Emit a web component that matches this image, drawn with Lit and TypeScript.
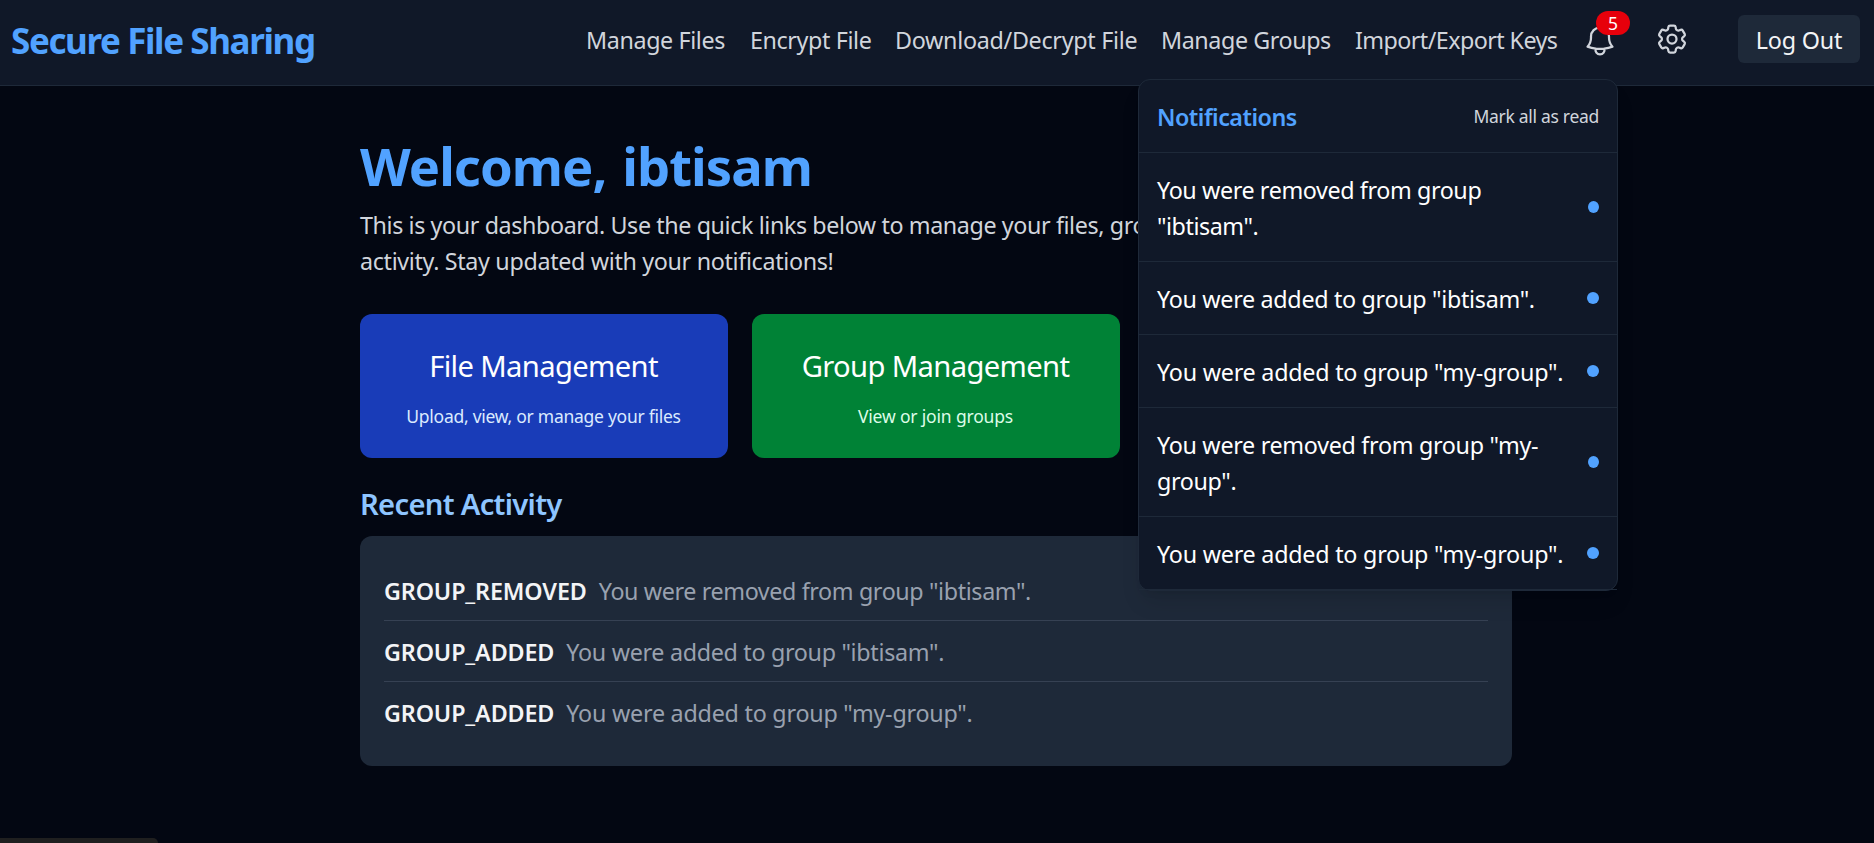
import { LitElement, html, css } from "lit";
import { customElement } from "lit/decorators.js";

interface Span { text: string; width?: number; track: number }

const links: Span[] = [
  { text: "Manage Files", width: 140, track: -0.38 },
  { text: "Encrypt File", width: 121, track: -0.39 },
  { text: "Download/Decrypt File", width: 242, track: -0.29 },
  { text: "Manage Groups", width: 170, track: -0.42 },
  { text: "Import/Export Keys", width: 202, track: -0.57 },
];

const notifications: Span[][] = [
  [{ text: "You were removed from group", track: -0.39 }, { text: '"ibtisam".', track: -0.45 }],
  [{ text: 'You were added to group "ibtisam".', track: -0.31 }],
  [{ text: 'You were added to group "my-group".', track: -0.23 }],
  [{ text: 'You were removed from group "my-', track: -0.3 }, { text: 'group".', track: -0.35 }],
  [{ text: 'You were added to group "my-group".', track: -0.23 }],
];

const activity: [string, Span][] = [
  ["GROUP_REMOVED", { text: 'You were removed from group "ibtisam".', track: -0.38 }],
  ["GROUP_ADDED", { text: 'You were added to group "ibtisam".', track: -0.31 }],
  ["GROUP_ADDED", { text: 'You were added to group "my-group".', track: -0.23 }],
];

@customElement("notification-panel")
class NotificationPanel extends LitElement {
  static styles = css`
    :host {
      display: block;
      box-sizing: border-box;
      width: 480px;
      background: #101828;
      border: 1px solid #1e2939;
      border-radius: 12px;
      box-shadow: 0 15px 22px -4px rgba(0, 0, 0, 0.1), 0 6px 9px -6px rgba(0, 0, 0, 0.1);
      color: #fff;
      white-space: nowrap;
    }
    .row {
      display: flex;
      justify-content: space-between;
      align-items: center;
      padding: 0 18px;
      border-bottom: 1px solid #1e2939;
    }
    .copy { padding: 19px 0 17px; }
    .line { display: block; line-height: 36px; }
    .title { font-weight: 600; letter-spacing: -0.5px; color: #51a2ff; }
    .mark { font-size: 17.5px; letter-spacing: -0.3px; color: #d1d5dc; }
    .dot { width: 12px; height: 12px; border-radius: 50%; background: #51a2ff; }
    .dot.narrow { width: 11px; }
  `;
  render() {
    return html`
      <div class="row">
        <div class="copy"><span class="line title">Notifications</span></div>
        <span class="mark">Mark all as read</span>
      </div>
      ${notifications.map((n) => html`
        <div class="row">
          <div class="copy">
            ${n.map((l) => html`<span class="line" style="letter-spacing:${l.track}px">${l.text}</span>`)}
          </div>
          <span class="dot ${n.length > 1 ? "narrow" : ""}"></span>
        </div>`)}
    `;
  }
}

@customElement("app-root")
class AppRoot extends LitElement {
  static styles = css`
    :host {
      display: flex;
      flex-direction: column;
      height: 843px;
      overflow: hidden;
      background: #030712;
      font-family: "Noto Sans", sans-serif;
      font-size: 23.3px;
      line-height: 36px;
      color: #f3f4f6;
      white-space: nowrap;
    }
    h1, h2, p { margin: 0; }
    header {
      display: flex;
      align-items: flex-start;
      box-sizing: border-box;
      height: 86px;
      padding-left: 11px;
      background: #101828;
      border-bottom: 1px solid #1e2939;
    }
    .brand {
      width: 575px;
      padding-top: 17px;
      line-height: 48px;
      font-size: 35px;
      font-weight: 700;
      letter-spacing: -1.39px;
      color: #51a2ff;
    }
    nav { display: flex; gap: 24px; padding-top: 22px; color: #d1d5dc; }
    .bell { position: relative; margin: 23px 0 0 25px; width: 36px; height: 36px; color: #d1d5dc; }
    .gear { margin: 21px 0 0 36px; width: 36px; height: 36px; color: #d1d5dc; }
    svg { display: block; width: 36px; height: 36px; }
    .badge {
      position: absolute;
      left: 14px;
      top: -12px;
      width: 34px;
      height: 24px;
      border-radius: 12px;
      background: #e7000b;
      color: #fff;
      font-size: 17.5px;
      line-height: 25px;
      text-align: center;
    }
    notification-panel { position: absolute; right: 0; top: 56px; z-index: 2; }
    .logout {
      box-sizing: border-box;
      width: 122px;
      height: 48px;
      margin: 15px 0 0 48px;
      padding-top: 7px;
      border-radius: 6px;
      background: #1e2939;
      text-align: center;
      letter-spacing: -0.19px;
    }
    main { width: 1152px; margin: 50px 0 0 360px; }
    .hello { line-height: 60px; font-size: 52.5px; font-weight: 700; letter-spacing: -0.95px; word-spacing: 3px; color: #51a2ff; }
    .intro { padding-top: 11px; color: #d1d5dc; letter-spacing: -0.4px; }
    .intro .second { letter-spacing: -0.335px; }
    .cards { display: grid; grid-template-columns: repeat(3, 368px); gap: 24px; margin-top: 35px; }
    .card { box-sizing: border-box; height: 144px; padding: 31px 1px 0 0; border-radius: 12px; text-align: center; }
    .card h2 { line-height: 42px; font-size: 29.2px; font-weight: 400; letter-spacing: -0.64px; color: #fff; }
    .card p { margin-top: 15px; line-height: 28px; font-size: 17.5px; letter-spacing: -0.27px; }
    .files { background: #193cb8; color: #dbeafe; }
    .groups { background: #008236; color: #dcfce7; }
    .groups p { letter-spacing: -0.17px; }
    .recent { margin-top: 25px; line-height: 42px; font-size: 29.2px; font-weight: 600; letter-spacing: -0.7px; color: #8ec5ff; }
    .log { margin-top: 11px; padding: 24px; border-radius: 12px; background: #1e2939; }
    .entry { display: flex; gap: 12px; padding: 13px 0 11px; border-bottom: 1px solid #364153; color: #99a1af; }
    .entry:last-child { border-bottom: 0; }
    .kind { font-weight: 600; letter-spacing: -0.12px; color: #f3f4f6; }
    .status { width: 158px; height: 5px; margin-top: auto; border-top-right-radius: 6px; background: #1f1f1f; }
  `;
  render() {
    return html`
      <header>
        <div class="brand">Secure File Sharing</div>
        <nav>
          ${links.map((l) => html`<span style="width:${l.width}px;letter-spacing:${l.track}px">${l.text}</span>`)}
        </nav>
        <div class="bell">
          <svg viewBox="0 0 24 24" fill="none" stroke="currentColor" stroke-width="1.5" stroke-linecap="round" stroke-linejoin="round">
            <path d="M14.857 17.082a23.848 23.848 0 0 0 5.454-1.31A8.967 8.967 0 0 1 18 9.75V9A6 6 0 0 0 6 9v.75a8.967 8.967 0 0 1-2.312 6.022c1.733.64 3.56 1.085 5.455 1.31m5.714 0a24.255 24.255 0 0 1-5.714 0m5.714 0a3 3 0 1 1-5.714 0" />
          </svg>
          <span class="badge">5</span>
          <notification-panel></notification-panel>
        </div>
        <div class="gear">
          <svg viewBox="0 0 24 24" fill="none" stroke="currentColor" stroke-width="1.5" stroke-linecap="round" stroke-linejoin="round">
            <path d="M9.594 3.94c.09-.542.56-.94 1.11-.94h2.593c.55 0 1.02.398 1.11.94l.213 1.281c.063.374.313.686.645.87.074.04.147.083.22.127.325.196.72.257 1.075.124l1.217-.456a1.125 1.125 0 0 1 1.37.49l1.296 2.247a1.125 1.125 0 0 1-.26 1.431l-1.003.827c-.293.241-.438.613-.43.992a7.723 7.723 0 0 1 0 .255c-.008.378.137.75.43.991l1.004.827c.424.35.534.955.26 1.43l-1.298 2.247a1.125 1.125 0 0 1-1.369.491l-1.217-.456c-.355-.133-.75-.072-1.076.124a6.47 6.47 0 0 1-.22.128c-.331.183-.581.495-.644.869l-.213 1.281c-.09.543-.56.94-1.11.94h-2.594c-.55 0-1.019-.398-1.11-.94l-.213-1.281c-.062-.374-.312-.686-.644-.87a6.52 6.52 0 0 1-.22-.127c-.325-.196-.72-.257-1.076-.124l-1.217.456a1.125 1.125 0 0 1-1.369-.49l-1.297-2.247a1.125 1.125 0 0 1 .26-1.431l1.004-.827c.292-.24.437-.613.43-.991a6.932 6.932 0 0 1 0-.255c.007-.38-.138-.751-.43-.992l-1.004-.827a1.125 1.125 0 0 1-.26-1.43l1.297-2.247a1.125 1.125 0 0 1 1.37-.491l1.216.456c.356.133.751.072 1.076-.124.072-.044.146-.086.22-.128.332-.183.582-.495.644-.869l.214-1.28Z" />
            <path d="M15 12a3 3 0 1 1-6 0 3 3 0 0 1 6 0Z" />
          </svg>
        </div>
        <div class="logout">Log Out</div>
      </header>
      <main>
        <h1 class="hello">Welcome, ibtisam</h1>
        <p class="intro">This is your dashboard. Use the quick links below to manage your files, groups, and recent<br /><span class="second">activity. Stay updated with your notifications!</span></p>
        <div class="cards">
          <div class="card files"><h2>File Management</h2><p>Upload, view, or manage your files</p></div>
          <div class="card groups"><h2>Group Management</h2><p>View or join groups</p></div>
        </div>
        <h2 class="recent">Recent Activity</h2>
        <div class="log">
          ${activity.map(([kind, s]) => html`
            <div class="entry"><span class="kind">${kind}</span><span style="letter-spacing:${s.track}px">${s.text}</span></div>`)}
        </div>
      </main>
      <div class="status"></div>
    `;
  }
}
